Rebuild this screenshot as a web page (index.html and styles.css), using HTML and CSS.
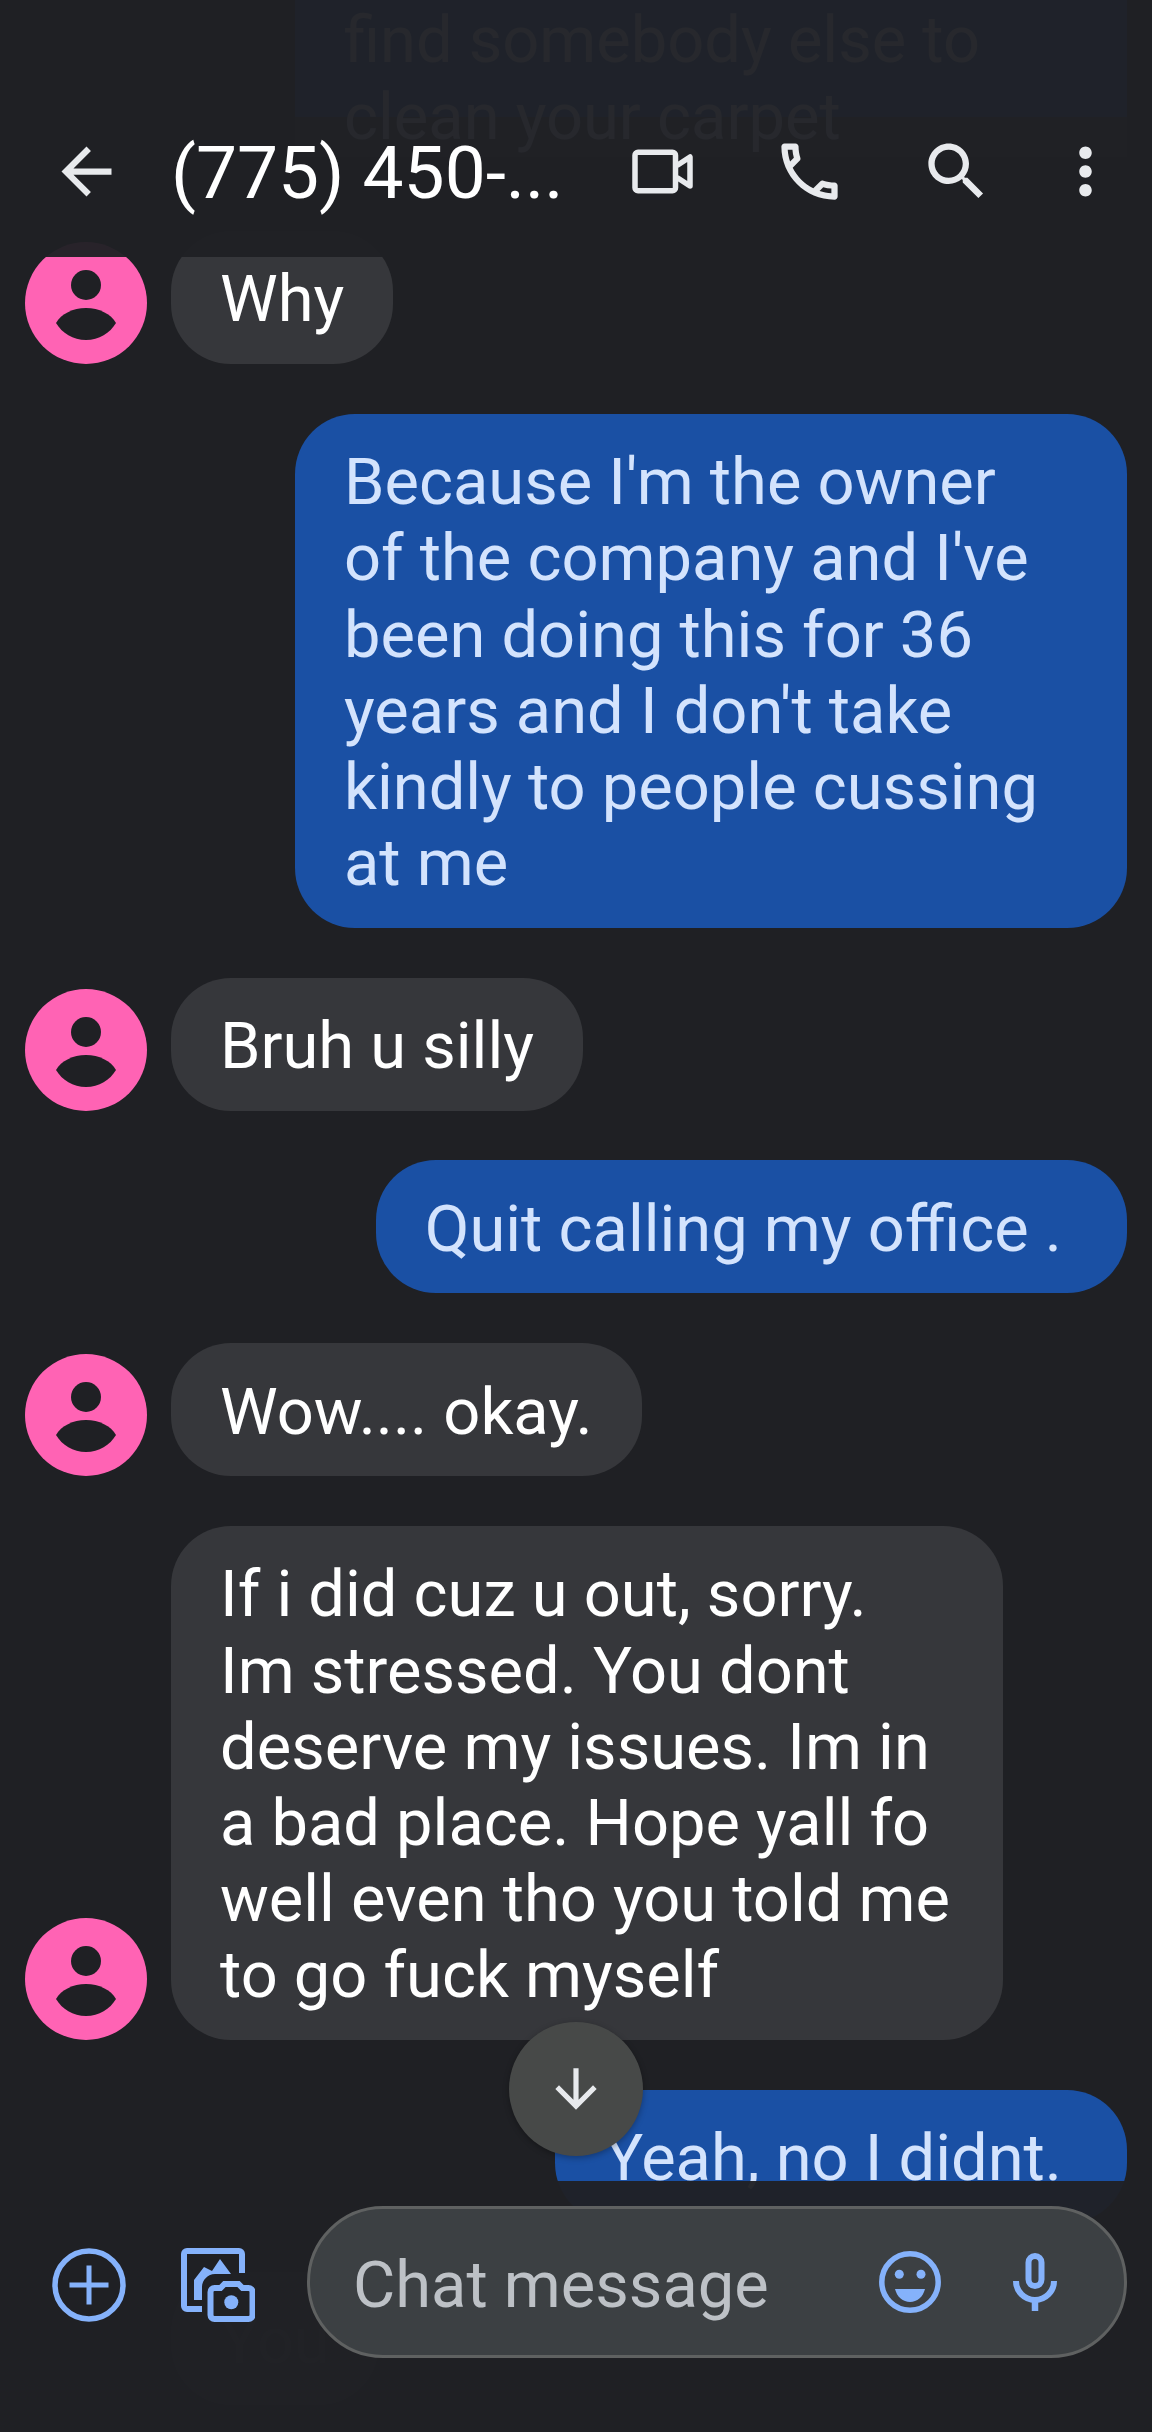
FILE: index.html
```html
<!DOCTYPE html>
<html lang="en">
<head>
    <meta charset="UTF-8">
    <title>Messages</title>
    <meta name="viewport" content="width=device-width, initial-scale=1.0">
    <link rel="stylesheet" href="styles.css">
</head>
<body>
    <div class="screen">
        <svg class="defs" width="0" height="0">
            <symbol id="avatar" viewBox="0 0 122 122">
                <circle cx="61" cy="61" r="61" fill="#ff63b4"/>
                <circle cx="61" cy="43" r="15" fill="#1f2024"/>
                <path d="M31 81C36 72 48 66 61 66S86 72 91 81C85 91 74 98 61 98S37 91 31 81Z" fill="#1f2024"/>
            </symbol>
        </svg>

        <header class="topbar">
            <svg class="top-icon back" viewBox="0 0 24 24"><path d="M20 11H7.83l5.59-5.59L12 4l-8 8 8 8 1.41-1.41L7.83 13H20v-2z"/></svg>
            <div class="title">(775) 450-...</div>
            <div class="actions">
                <svg class="top-icon" viewBox="0 0 75 75"><g fill="none" stroke="#e8eaed" stroke-width="5.5" stroke-linejoin="round"><rect x="10" y="18.2" width="40.5" height="38.5" rx="3"/><path d="M52 31.5L65 23V52L52 43.5"/></g></svg>
                <svg class="top-icon" viewBox="0 0 24 24"><path d="M6.54 5c.06.89.21 1.76.45 2.59l-1.2 1.2c-.41-1.2-.67-2.47-.76-3.79h1.51m9.86 12.02c.85.24 1.72.39 2.6.45v1.49c-1.32-.09-2.59-.35-3.8-.75l1.2-1.19M7.5 3H4c-.55 0-1 .45-1 1 0 9.39 7.61 17 17 17 .55 0 1-.45 1-1v-3.49c0-.55-.45-1-1-1-1.24 0-2.45-.2-3.57-.57-.1-.04-.21-.05-.31-.05-.26 0-.51.1-.71.29l-2.2 2.2c-2.83-1.45-5.15-3.76-6.59-6.59l2.2-2.2c.28-.28.36-.67.25-1.02C8.7 6.45 8.5 5.25 8.5 4c0-.55-.45-1-1-1z"/></svg>
                <svg class="top-icon" viewBox="0 0 24 24"><path d="M15.5 14h-.79l-.28-.27C15.41 12.59 16 11.11 16 9.5 16 5.91 13.09 3 9.5 3S3 5.91 3 9.5 5.91 16 9.5 16c1.61 0 3.09-.59 4.23-1.57l.27.28v.79l5 4.99L20.49 19l-4.99-5zm-6 0C7.01 14 5 11.99 5 9.5S7.01 5 9.5 5 14 7.01 14 9.5 11.99 14 9.5 14z"/></svg>
                <svg class="top-icon more" viewBox="0 0 24 24"><path d="M12 8c1.1 0 2-.9 2-2s-.9-2-2-2-2 .9-2 2 .9 2 2 2zm0 2c-1.1 0-2 .9-2 2s.9 2 2 2 2-.9 2-2-.9-2-2-2zm0 6c-1.1 0-2 .9-2 2s.9 2 2 2 2-.9 2-2-.9-2-2-2z"/></svg>
            </div>
        </header>

        <main class="thread">
            <div class="row sent">
                <div class="bubble bubble-cut">find somebody else to clean your carpet</div>
            </div>
            <div class="row">
                <svg class="avatar"><use href="#avatar"/></svg>
                <div class="bubble">Why</div>
            </div>
            <div class="row sent">
                <div class="bubble">Because I'm the owner of the company and I've been doing this for 36 years and I don't take kindly to people cussing at me</div>
            </div>
            <div class="row">
                <svg class="avatar"><use href="#avatar"/></svg>
                <div class="bubble">Bruh u silly</div>
            </div>
            <div class="row sent">
                <div class="bubble">Quit calling my office .</div>
            </div>
            <div class="row">
                <svg class="avatar"><use href="#avatar"/></svg>
                <div class="bubble">Wow.... okay.</div>
            </div>
            <div class="row">
                <svg class="avatar"><use href="#avatar"/></svg>
                <div class="bubble">If i did cuz u out, sorry. Im stressed. You dont deserve my issues. Im in a bad place. Hope yall fo well even tho you told me to go fuck myself</div>
            </div>
            <div class="row sent">
                <div class="bubble">Yeah, no I didnt.</div>
            </div>
            <div class="row">
                <div class="avatar-space"></div>
                <div class="bubble bubble-hidden">You</div>
            </div>
        </main>

        <div class="scroll-down">
            <svg viewBox="0 0 24 24"><path d="M20 12l-1.41-1.41L13 16.17V4h-2v12.17l-5.58-5.59L4 12l8 8 8-8z"/></svg>
        </div>

        <footer class="composer">
            <svg class="attach plus" viewBox="0 0 74 74"><g fill="none" stroke="#85b2fb"><circle cx="37" cy="37" r="34" stroke-width="5.5"/><path d="M17.5 37H56.5M37 17.5V56.5" stroke-width="5"/></g></svg>
            <svg class="attach gallery" viewBox="0 0 74 74">
                <g fill="none" stroke="#85b2fb" stroke-width="6">
                    <path d="M61 25V6a3 3 0 0 0-3-3H6a3 3 0 0 0-3 3v52a3 3 0 0 0 3 3h15"/>
                    <path d="M29.5 44a4 4 0 0 1 4-4h6l4-4h14l4 4h6a4 4 0 0 1 4 4v23a4 4 0 0 1-4 4H33.5a4 4 0 0 1-4-4z"/>
                </g>
                <path d="M13 52V32L23 19l8 4 8-12 11 15H34c-7 0-13 6-13 13v13z" fill="#85b2fb"/>
                <circle cx="50.3" cy="54.3" r="7" fill="#85b2fb"/>
            </svg>
            <div class="input">
                <div class="placeholder">Chat message</div>
                <svg class="emoji" viewBox="0 0 62 62">
                    <circle cx="31" cy="31" r="28.2" fill="none" stroke="#85b2fb" stroke-width="5.5"/>
                    <circle cx="20.3" cy="23.3" r="4.5" fill="#85b2fb"/>
                    <circle cx="42" cy="23.3" r="4.5" fill="#85b2fb"/>
                    <path d="M16 38H46C44 46 38 51 31 51S18 46 16 38Z" fill="#85b2fb"/>
                </svg>
                <svg class="mic" viewBox="0 0 44 58">
                    <g fill="none" stroke="#85b2fb" stroke-width="6">
                        <rect x="15.5" y="3" width="13" height="30" rx="6.5"/>
                        <path d="M3 28a19 19 0 0 0 38 0"/>
                        <path d="M22 46V58" stroke-width="6.5"/>
                    </g>
                </svg>
            </div>
        </footer>
    </div>
</body>
</html>
```

FILE: styles.css
```css
:root {
    --bg: #1f2024;
    --bar: rgba(31, 32, 36, 0.96);
    --received: #36373b;
    --sent: #1a50a4;
    --sent-text: #d3e3fd;
    --icon: #e8eaed;
}
body {
    margin: 0;
    background: var(--bg);
    font-family: Roboto, "Liberation Sans", sans-serif;
}
.defs {
    display: block;
}
.screen {
    position: relative;
    width: 1152px;
    height: 2432px;
    overflow: hidden;
}

/* top bar sits over the thread, the first bubble shows faintly through it */
.topbar {
    position: absolute;
    top: 0;
    left: 0;
    right: 0;
    z-index: 2;
    height: 257px;
    box-sizing: border-box;
    padding: 133.5px 29.5px 0 49px;
    display: flex;
    align-items: flex-start;
    background: var(--bar);
}
.top-icon {
    display: block;
    flex: none;
    width: 75px;
    height: 75px;
    fill: var(--icon);
}
.title {
    flex: 1;
    margin-left: 47px;
    padding-top: 2px;
    color: #fff;
    font-size: 73px;
    line-height: 75px;
    white-space: nowrap;
}
.actions {
    display: flex;
    gap: 72px;
}
.actions .more {
    margin-left: -18px;
}

.thread {
    display: flex;
    flex-direction: column;
    gap: 49.8px;
    padding: 0 25px;
}
.row {
    display: flex;
    align-items: flex-end;
    gap: 24px;
}
.row.sent {
    justify-content: flex-end;
}
.avatar, .avatar-space {
    flex: none;
    width: 122px;
    height: 122px;
}
.bubble {
    max-width: 832px;
    box-sizing: border-box;
    padding: 30.4px 49px 26.4px;
    border-radius: 60px;
    background: var(--received);
    color: #fff;
    font-size: 65px;
    line-height: 76.2px;
}
.sent .bubble {
    padding-right: 65px;
    background: var(--sent);
    color: var(--sent-text);
}
.sent .bubble-cut {
    padding-top: 2.4px;
    border-radius: 0;
    background: linear-gradient(var(--sent) 117px, #36373b 117px, #36373b 157px, transparent 157px);
}
.bubble-hidden {
    color: #555;
}

.scroll-down {
    position: absolute;
    left: 509px;
    top: 2022px;
    z-index: 3;
    width: 134px;
    height: 134px;
    border-radius: 50%;
    background: #474948;
    box-shadow: 0 2px 6px rgba(0, 0, 0, 0.3);
    display: flex;
    align-items: center;
    justify-content: center;
}
.scroll-down svg {
    width: 62px;
    height: 62px;
    fill: var(--icon);
}

.composer {
    position: absolute;
    left: 0;
    right: 0;
    bottom: 0;
    z-index: 2;
    height: 251px;
    box-sizing: border-box;
    padding: 25px 25px 0 52px;
    display: flex;
    align-items: flex-start;
    background: var(--bar);
}
.attach {
    flex: none;
    width: 74px;
    height: 74px;
    margin-top: 42px;
}
.gallery {
    margin-left: 55px;
}
.input {
    flex: 1;
    height: 152px;
    margin-left: 52px;
    box-sizing: border-box;
    padding: 0 67px 0 43px;
    border: 3px solid #5f6161;
    border-radius: 76px;
    background: #3c4043;
    display: flex;
    align-items: center;
}
.placeholder {
    flex: 1;
    padding-top: 5px;
    color: #bdc1c6;
    font-size: 65px;
}
.emoji {
    width: 62px;
    height: 62px;
}
.mic {
    width: 44px;
    height: 58px;
    margin-left: 72px;
}
```
